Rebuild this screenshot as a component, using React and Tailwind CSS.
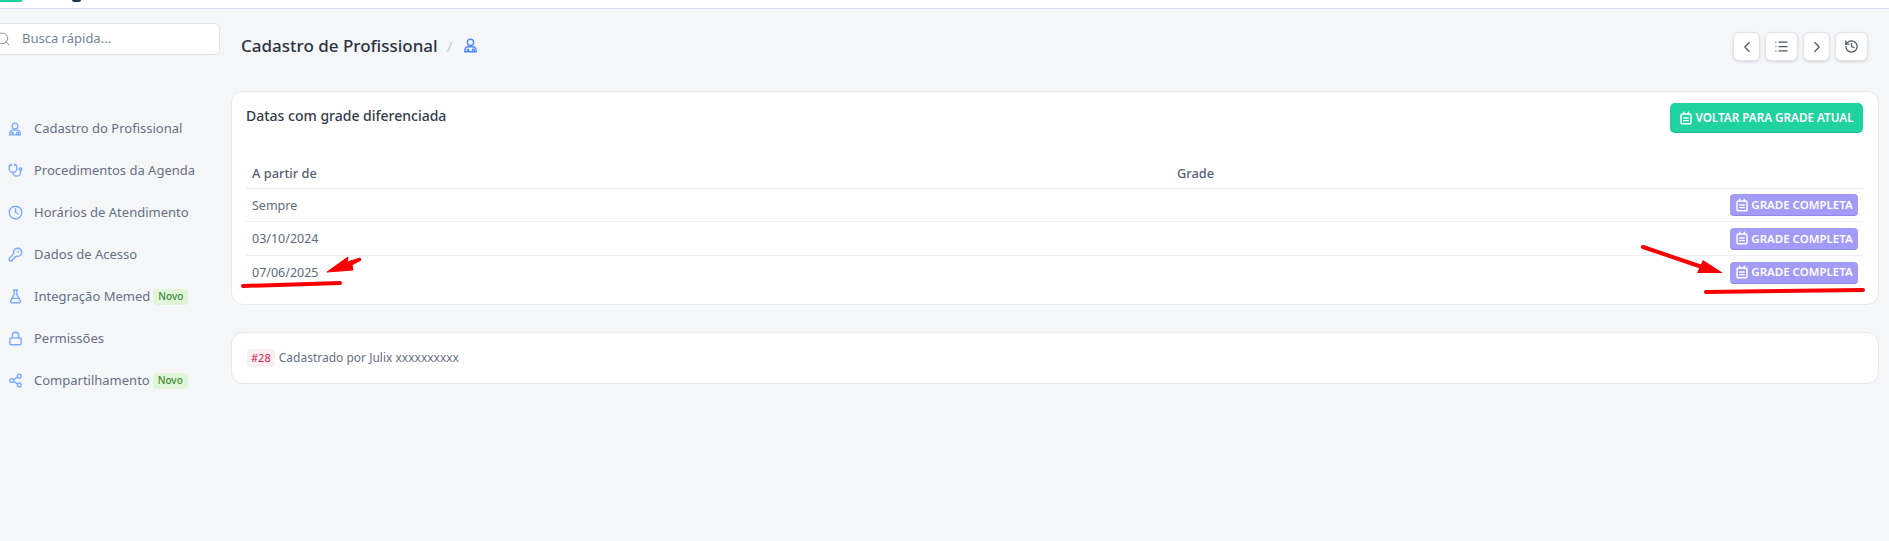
import React from "react";
import { Search, Stethoscope, Clock, KeyRound, FlaskConical, Lock, Share2, ChevronLeft, ChevronRight, List, History } from "lucide-react";

const Doctor = ({ className }) => (
  <svg viewBox="0 0 24 24" fill="none" stroke="currentColor" strokeWidth="2.200" strokeLinecap="round" strokeLinejoin="round" className={className}>
    <circle cx="12" cy="7" r="5" />
    <path d="M3 22v-2.500a6 6 0 0 1 6-5.500h6a6 6 0 0 1 6 5.500V22" />
    <path d="M3 22h18" />
    <circle cx="8" cy="19" r="1.300" />
    <path d="M15 22v-3a1.500 1.500 0 0 1 3 0v3" />
  </svg>
);

const Cal = () => (
  <svg viewBox="0 0 24 24" className="w-[14px] h-[14px] shrink-0" fill="none" stroke="currentColor" strokeWidth="2.600" strokeLinecap="round">
    <rect x="3.500" y="5" width="17" height="17" rx="2.500" />
    <path d="M8 2v4M16 2v4" />
    <path d="M8 12h8M8 16.500h8" strokeWidth="2.200" />
  </svg>
);

const nav = [
  [Doctor, "Cadastro do Profissional", null, "w-[14px] h-[14px]", "ml-[12px]"],
  [Stethoscope, "Procedimentos da Agenda", null, "w-[15px] h-[15px]", "ml-[11px]"],
  [Clock, "Horários de Atendimento", null, "w-[15px] h-[15px]", "ml-[11px]"],
  [KeyRound, "Dados de Acesso", null, "w-[15px] h-[15px]", "ml-[11px]"],
  [FlaskConical, "Integração Memed", "Novo", "w-[15px] h-[15px]", "ml-[11px]"],
  [Lock, "Permissões", null, "w-[15px] h-[15px]", "ml-[11px]"],
  [Share2, "Compartilhamento", "Novo", "w-[15px] h-[15px]", "ml-[11px]"],
];

const rows = ["Sempre", "03/10/2024", "07/06/2025"];

const IconBtn = ({ w, children }) => (
  <button className={`${w} h-[29px] flex items-center justify-center bg-white border border-[#dfe2e8] rounded-[6px] text-[#4b5563] shadow-sm`}>
    {children}
  </button>
);

export default function App() {
  return (
    <div className="relative w-[1889px] h-[541px] overflow-hidden bg-[#f5f6f8] text-[#5f6b7c] font-['Noto_Sans',sans-serif]">
      <header className="h-[9px] bg-white border-b border-[#d9dde9] overflow-hidden flex items-start gap-[50px]">
        <div className="w-[22px] h-[2px] bg-[#1fd19f]" />
        <div className="w-[9px] h-[2px] rounded-b bg-[#1c3a4a]" />
      </header>

      <div className="flex items-start">
        <aside className="w-[231px] shrink-0">
          <div className="mt-[14px] -ml-[20px] w-[240px] h-[32px] bg-white border border-[#dfe2e8] rounded-[5px] flex items-center pl-[14px] gap-[11px]">
            <Search className="w-[16px] h-[16px] text-[#8a94a3] shrink-0" strokeWidth={1.5} />
            <span className="text-[13px] text-[#75839a]">Busca rápida...</span>
          </div>
          <nav className="mt-[61px] flex flex-col gap-[17px]">
            {nav.map(([Icon, label, badge, size, ml]) => (
              <div key={label} className="h-[25px] flex items-center pl-[8px]">
                <Icon className={`${size} text-[#78aaff] shrink-0`} strokeWidth={2.2} />
                <span className={`${ml} text-[13px] text-[#667085] whitespace-nowrap`}>{label}</span>
                {badge && (
                  <span className="ml-[3px] h-[16px] px-[5px] flex items-center rounded-[4px] bg-[#e1f5d9] text-[#3f8a3a] text-[10px] font-medium">{badge}</span>
                )}
              </div>
            ))}
          </nav>
        </aside>

        <main className="w-[1648px] shrink-0">
          <div className="h-[82px] flex items-start pt-[23px] pr-[11px]">
            <h1 className="ml-[10px] text-[17px] leading-[28px] font-medium text-[#2b3442]">Cadastro de Profissional</h1>
            <span className="ml-[9px] text-[#c5cad3] leading-[28px] text-[15px]">/</span>
            <Doctor className="ml-[11px] mt-[6px] w-[15px] h-[15px] text-[#4f8df5]" />
            <div className="ml-auto flex gap-[5px]">
              <IconBtn w="w-[27px]"><ChevronLeft className="w-[18px] h-[18px]" strokeWidth={1.5} /></IconBtn>
              <IconBtn w="w-[33px]"><List className="w-[15px] h-[15px]" strokeWidth={2} /></IconBtn>
              <IconBtn w="w-[27px]"><ChevronRight className="w-[18px] h-[18px]" strokeWidth={1.5} /></IconBtn>
              <IconBtn w="w-[33px]"><History className="w-[15px] h-[15px]" strokeWidth={2} /></IconBtn>
            </div>
          </div>

          <section className="h-[214px] bg-white border border-[#e6e8ee] rounded-[12px] pt-[11px] pl-[14px] pr-[15px]">
            <div className="flex items-start justify-between">
              <h2 className="mt-[3px] text-[14px] leading-[20px] font-medium text-[#333c4a]">Datas com grade diferenciada</h2>
              <button className="w-[193px] h-[30px] flex items-center justify-center gap-[2px] rounded-[5px] bg-[#1fd3a0] border-b border-[#19b98c] text-white text-[11.700px] font-semibold whitespace-nowrap">
                <Cal />VOLTAR PARA GRADE ATUAL
              </button>
            </div>
            <table className="mt-[24px] w-full border-collapse text-[12.500px]">
              <thead>
                <tr className="h-[31px] border-b border-[#eceef2]">
                  <th className="w-[925px] pl-[6px] pt-[2px] text-left font-medium text-[#566173] text-[12.800px]">A partir de</th>
                  <th className="pl-[6px] pt-[2px] text-left font-medium text-[#566173] text-[12.800px]">Grade</th>
                  <th />
                </tr>
              </thead>
              <tbody>
                {rows.map((r, i) => (
                  <tr key={r} className={`h-[33.500px] ${i < 2 ? "border-b border-[#eceef2]" : ""}`}>
                    <td className="pl-[6px] pt-[3px] text-[#5f6b7c]">{r}</td>
                    <td />
                    <td className="pr-[5px] pt-[1px]">
                      <button className="ml-auto w-[128px] h-[22px] flex items-center justify-center gap-[2px] rounded-[4px] bg-[#a29bf8] border-b border-[#8f88e8] text-white text-[11.500px] font-semibold whitespace-nowrap">
                        <Cal />GRADE COMPLETA
                      </button>
                    </td>
                  </tr>
                ))}
              </tbody>
            </table>
          </section>

          <section className="mt-[27px] h-[52px] bg-white border border-[#e6e8ee] rounded-[12px] pl-[15px] flex items-center gap-[4px]">
            <span className="h-[18px] px-[4px] flex items-center rounded-[4px] bg-[#f8f0f3] text-[#d6204f] text-[11px]">#28</span>
            <span className="text-[12px] text-[#667085]">Cadastrado por Julix xxxxxxxxxx</span>
          </section>
        </main>
      </div>

      <svg className="absolute inset-0 w-[1889px] h-[541px] pointer-events-none" viewBox="0 0 1889 541" fill="none">
        <path d="M243 286 L340 283" stroke="#f80000" strokeWidth="4" strokeLinecap="round" />
        <path d="M327 272 L348 257 L347 262 L360 258 L361 260 L352 265 L353 270 Z" fill="#f80000" stroke="#f80000" strokeWidth="1" strokeLinejoin="round" />
        <path d="M1643 247 L1702 267" stroke="#f80000" strokeWidth="4" strokeLinecap="round" />
        <path d="M1723 273 L1703 260 L1697 273 Z" fill="#f80000" />
        <path d="M1706 292 L1863 290" stroke="#f80000" strokeWidth="4" strokeLinecap="round" />
      </svg>
    </div>
  );
}
